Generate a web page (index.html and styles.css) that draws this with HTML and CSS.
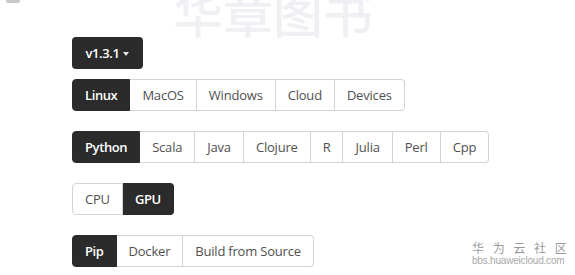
FILE: index.html
```html
<!DOCTYPE html>
<html>
<head>
<meta charset="utf-8">
<link rel="stylesheet" href="styles.css">
</head>
<body>
<div class="watermark-top">华章图书</div>
<div class="corner-mark"></div>
<main class="page">
  <div class="version-row">
    <button class="version">v1.3.1 <span class="caret"></span></button>
  </div>
  <div class="group">
    <span class="opt active">Linux</span><span class="opt">MacOS</span><span class="opt">Windows</span><span class="opt">Cloud</span><span class="opt">Devices</span>
  </div>
  <div class="group">
    <span class="opt active">Python</span><span class="opt">Scala</span><span class="opt">Java</span><span class="opt">Clojure</span><span class="opt">R</span><span class="opt">Julia</span><span class="opt">Perl</span><span class="opt">Cpp</span>
  </div>
  <div class="group">
    <span class="opt">CPU</span><span class="opt active">GPU</span>
  </div>
  <div class="group">
    <span class="opt active">Pip</span><span class="opt">Docker</span><span class="opt">Build from Source</span>
  </div>
</main>
<div class="watermark-br">
  <div class="wm-cn">华 为 云 社 区</div>
  <div class="wm-url">bbs.huaweicloud.com</div>
</div>
</body>
</html>
```
FILE: styles.css
```css
html, body {
  margin: 0;
  padding: 0;
  background: #ffffff;
  width: 575px;
  height: 275px;
  overflow: hidden;
  font-family: "Open Sans", "Noto Sans", sans-serif;
}

.watermark-top {
  position: absolute;
  left: 173px;
  top: -19px;
  font-family: "Noto Sans CJK SC", sans-serif;
  font-size: 50px;
  font-weight: 500;
  color: #eff0f3;
  line-height: 1.2;
  white-space: nowrap;
}

.corner-mark {
  position: absolute;
  left: 6px;
  top: 0;
  width: 14px;
  height: 3px;
  background: #c8c8c8;
  border-radius: 0 0 2px 2px;
}

.page {
  position: relative;
  padding: 37px 0 0 72px;
  display: flex;
  flex-direction: column;
  align-items: flex-start;
}

.version-row {
  margin-bottom: 10px;
}

.version {
  height: 32px;
  width: 71px;
  border: none;
  border-radius: 4px;
  background: #2b2b2b;
  color: #fff;
  font-family: "Open Sans", sans-serif;
  font-size: 13px;
  font-weight: 600;
  letter-spacing: -0.4px;
  display: flex;
  align-items: center;
  justify-content: center;
  gap: 4px;
  padding: 0;
}

.caret {
  display: inline-block;
  width: 0;
  height: 0;
  border-left: 3.5px solid transparent;
  border-right: 3.5px solid transparent;
  border-top: 4px solid #e8e8e8;
  margin-top: 1px;
}

.group {
  display: flex;
  height: 32px;
  margin-bottom: 20px;
}

.opt {
  display: flex;
  align-items: center;
  justify-content: center;
  padding: 0 12px;
  border: 1px solid #d4d4d4;
  border-left: none;
  color: #505050;
  font-size: 13px;
  letter-spacing: -0.2px;
  background: #fff;
  box-sizing: border-box;
  height: 32px;
  white-space: nowrap;
}

.opt:first-child {
  border-left: 1px solid #d4d4d4;
  border-radius: 4px 0 0 4px;
}

.opt:last-child {
  border-radius: 0 4px 4px 0;
}

.opt.active {
  background: #2b2b2b;
  border-color: #2b2b2b;
  color: #fff;
  font-weight: 600;
  letter-spacing: -0.4px;
}

.watermark-br {
  position: absolute;
  left: 472px;
  top: 240px;
  width: 92px;
  color: #9a9a9a;
  text-align: center;
  white-space: nowrap;
}

.wm-cn {
  font-family: "Noto Sans CJK SC", sans-serif;
  font-size: 12px;
  letter-spacing: 3px;
  line-height: 15px;
}

.wm-url {
  font-family: "Liberation Sans", sans-serif;
  font-size: 10px;
  line-height: 12px;
  color: #a8a8a8;
  letter-spacing: -0.2px;
}
```
